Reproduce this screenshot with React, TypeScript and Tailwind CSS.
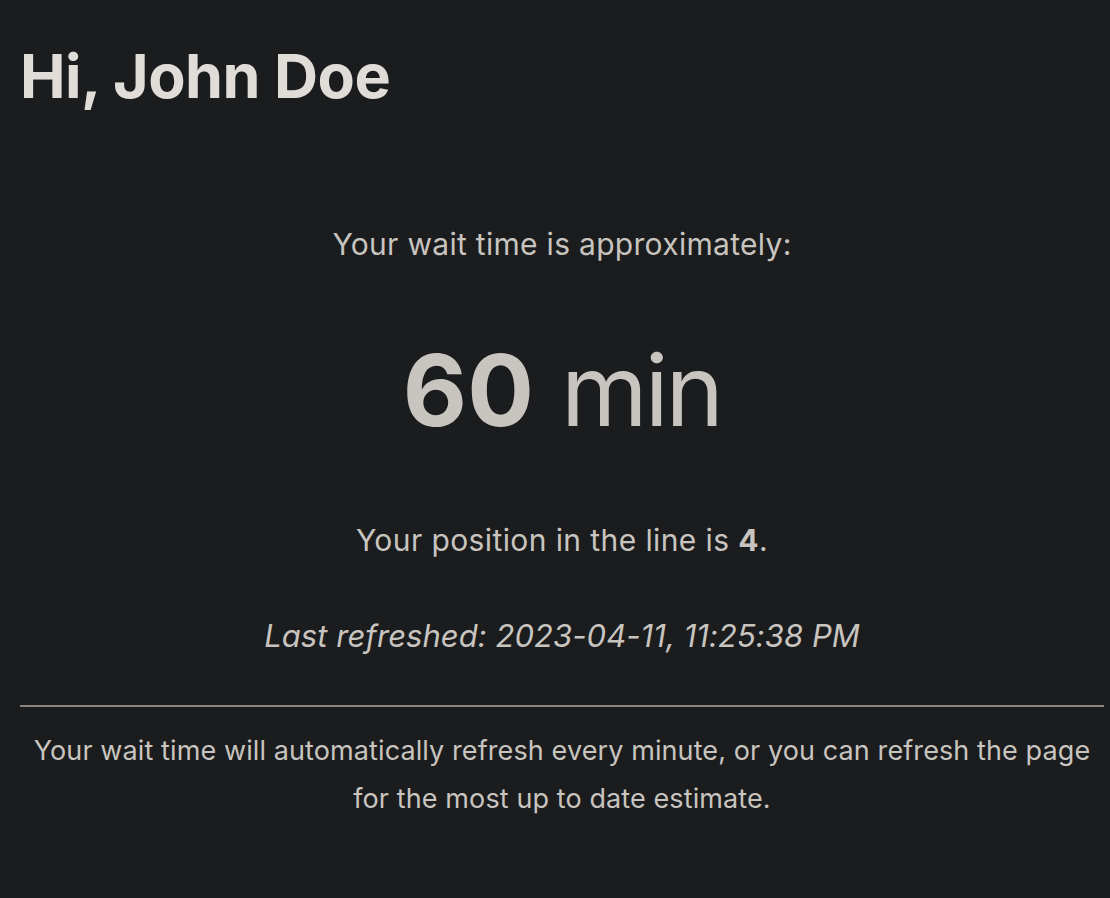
export default function App() {
  return (
    <div className="min-h-[898px] w-full bg-[#1b1c1e] text-[#c8c4bf] pl-[20px] pr-[6px] pt-[36px]" style={{ fontFamily: 'Inter, "Noto Sans", sans-serif' }}>
      <h1 className="text-[61px] font-bold leading-[80px] text-[#e0ddd8] tracking-[-0.5px]">Hi, John Doe</h1>
      <div className="mt-[108px] flex flex-col items-center text-center">
        <p className="text-[30px] leading-[40px] tracking-[0.3px]">Your wait time is approximately:</p>
        <p className="mt-[66px] text-[99px] leading-[120px] flex items-baseline">
          <span className="font-bold">60</span>
          <span className="ml-[27px] tracking-[-3px]">min</span>
        </p>
        <p className="mt-[70px] text-[30px] leading-[40px] tracking-[0.4px]">Your position in the line is <span className="font-bold">4</span>.</p>
        <p className="mt-[56px] text-[31px] leading-[40px] italic tracking-[0.05px]">Last refreshed: 2023-04-11, 11:25:38 PM</p>
      </div>
      <hr className="mt-[49px] border-0 border-t-[2px] border-[#8a847c]" />
      <p className="mt-[20px] text-center text-[27px] leading-[48px] tracking-[0.1px]">Your wait time will automatically refresh every minute, or you can refresh the page for the most up to date estimate.</p>
    </div>
  );
}
